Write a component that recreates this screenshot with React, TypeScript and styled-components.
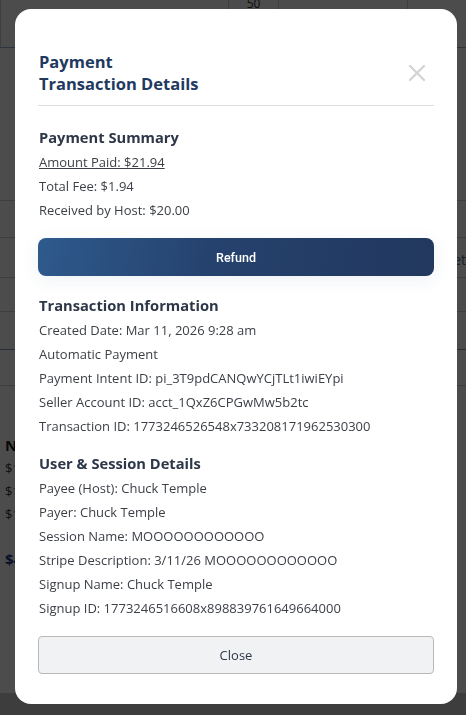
import styled, { createGlobalStyle } from "styled-components";

const GlobalStyle = createGlobalStyle`
  html, body {
    margin: 0;
    padding: 0;
    background: #cccccc;
    font-family: "Open Sans", "Liberation Sans", sans-serif;
  }
  * { box-sizing: border-box; }
`;

// page behind the dialog (mostly hidden)
const Page = styled.div`
  height: 693px;
  background: #ffffff;
  overflow: hidden;
`;

const ChartStrip = styled.div`
  height: 48px;
  display: grid;
  grid-template-columns: 228px 50px 129px 1fr;
  border-bottom: 1px solid #9fb3c8;
`;

const ChartCell = styled.div`
  border-left: 1px solid #cfcfcf;
  font-family: "Open Sans", sans-serif;
  font-size: 12px;
  color: #333;
  text-align: center;
  line-height: 8px;
`;

const Rows = styled.div`
  padding-top: 152px;
`;

const Row = styled.div<{ $h: number; $accent?: boolean }>`
  height: ${(p) => p.$h}px;
  border-top: 1px solid ${(p) => (p.$accent ? "#7f9cc4" : "#cfcfcf")};
  display: flex;
  justify-content: flex-end;
  align-items: flex-end;
  padding: 0 0 8px;
  font-size: 14px;
  color: #5c6f8a;
`;

const BgCard = styled.div`
  padding: 40px 0 0 5px;
  font-size: 13px;
  color: #333;
  line-height: 23px;
`;

const BgTitle = styled.div`
  font-weight: 700;
  font-size: 15px;
  color: #1a1a1a;
`;

const BgTotal = styled.div`
  margin-top: 22px;
  font-weight: 700;
  font-size: 15px;
  color: #1e3a8a;
`;

const Overlay = styled.div`
  position: fixed;
  inset: 0;
  background: rgba(0, 0, 0, 0.7);
  display: flex;
  justify-content: flex-start;
  align-items: flex-start;
  padding: 9px 0 0 15px;
`;

const Dialog = styled.div`
  width: 442px;
  background: #ffffff;
  border-radius: 16px;
  padding: 42px 23px 30px;
  display: flex;
  flex-direction: column;
`;

const Header = styled.div`
  display: flex;
  justify-content: space-between;
  align-items: center;
  padding-bottom: 10px;
  border-bottom: 1px solid #dedede;
`;

const Title = styled.h2`
  margin: 0;
  font-size: 16.5px;
  line-height: 22px;
  font-weight: 700;
  color: #1f3a5f;
  padding-left: 1px;
`;

const CloseIcon = styled.button`
  border: none;
  background: none;
  padding: 0;
  margin-right: 7px;
  width: 20px;
  height: 20px;
  display: flex;
  align-items: center;
  justify-content: center;
  cursor: pointer;
`;

const Section = styled.section<{ $gap?: number }>`
  margin-top: ${(p) => p.$gap ?? 14}px;
  padding-left: 1px;
`;

const SectionTitle = styled.h3`
  margin: 0 0 2px;
  font-size: 14.7px;
  line-height: 22px;
  font-weight: 700;
  color: #2d3748;
`;

const Line = styled.div<{ $link?: boolean }>`
  font-size: 13px;
  line-height: 24px;
  color: #3b3f46;
  text-decoration: ${(p) => (p.$link ? "underline" : "none")};
  white-space: nowrap;
`;

const RefundButton = styled.button`
  margin-top: 16px;
  height: 38px;
  width: 100%;
  border: none;
  border-radius: 8px;
  background: linear-gradient(100deg, #2e5a8c 0%, #25416d 45%, #22385e 100%);
  box-shadow: 0 4px 18px rgba(40, 80, 140, 0.08);
  color: #ffffff;
  font-family: Roboto, "Liberation Sans", sans-serif;
  font-weight: 500;
  font-size: 12.5px;
  cursor: pointer;
`;

const FooterButton = styled.button`
  margin-top: 16px;
  height: 38px;
  width: 100%;
  background: #f1f2f4;
  border: 1px solid #b9b9b9;
  border-radius: 4px;
  font-family: "Open Sans", sans-serif;
  font-size: 13px;
  color: #2d3748;
  cursor: pointer;
`;

export default function App() {
  return (
    <>
      <GlobalStyle />
      <Page>
        <ChartStrip>
          <ChartCell />
          <ChartCell>50</ChartCell>
          <ChartCell />
          <ChartCell />
        </ChartStrip>
        <Rows>
          <Row $h={37} />
          <Row $h={40}>et</Row>
          <Row $h={34} />
          <Row $h={38} />
          <Row $h={36} $accent />
          <Row $h={1} />
        </Rows>
        <BgCard>
          <BgTitle>Next Payout</BgTitle>
          <div>$12.00</div>
          <div>$15.00</div>
          <div>$18.00</div>
          <BgTotal>$45.00</BgTotal>
        </BgCard>
      </Page>
      <Overlay>
        <Dialog>
          <Header>
            <Title>
              Payment
              <br />
              Transaction Details
            </Title>
            <CloseIcon aria-label="Close">
              <svg width="18" height="18" viewBox="0 0 18 18">
                <path d="M2 2 L16 16 M16 2 L2 16" stroke="#d4d4d4" strokeWidth="2.4" strokeLinecap="round" />
              </svg>
            </CloseIcon>
          </Header>

          <Section $gap={20}>
            <SectionTitle>Payment Summary</SectionTitle>
            <Line $link>Amount Paid: $21.94</Line>
            <Line>Total Fee: $1.94</Line>
            <Line>Received by Host: $20.00</Line>
          </Section>

          <RefundButton>Refund</RefundButton>

          <Section $gap={18}>
            <SectionTitle>Transaction Information</SectionTitle>
            <Line>Created Date: Mar 11, 2026 9:28 am</Line>
            <Line>Automatic Payment</Line>
            <Line>Payment Intent ID: pi_3T9pdCANQwYCjTLt1iwiEYpi</Line>
            <Line>Seller Account ID: acct_1QxZ6CPGwMw5b2tc</Line>
            <Line>Transaction ID: 1773246526548x733208171962530300</Line>
          </Section>

          <Section>
            <SectionTitle>User &amp; Session Details</SectionTitle>
            <Line>Payee (Host): Chuck Temple</Line>
            <Line>Payer: Chuck Temple</Line>
            <Line>Session Name: MOOOOOOOOOOOO</Line>
            <Line>Stripe Description: 3/11/26 MOOOOOOOOOOOO</Line>
            <Line>Signup Name: Chuck Temple</Line>
            <Line>Signup ID: 1773246516608x898839761649664000</Line>
          </Section>

          <FooterButton>Close</FooterButton>
        </Dialog>
      </Overlay>
    </>
  );
}
